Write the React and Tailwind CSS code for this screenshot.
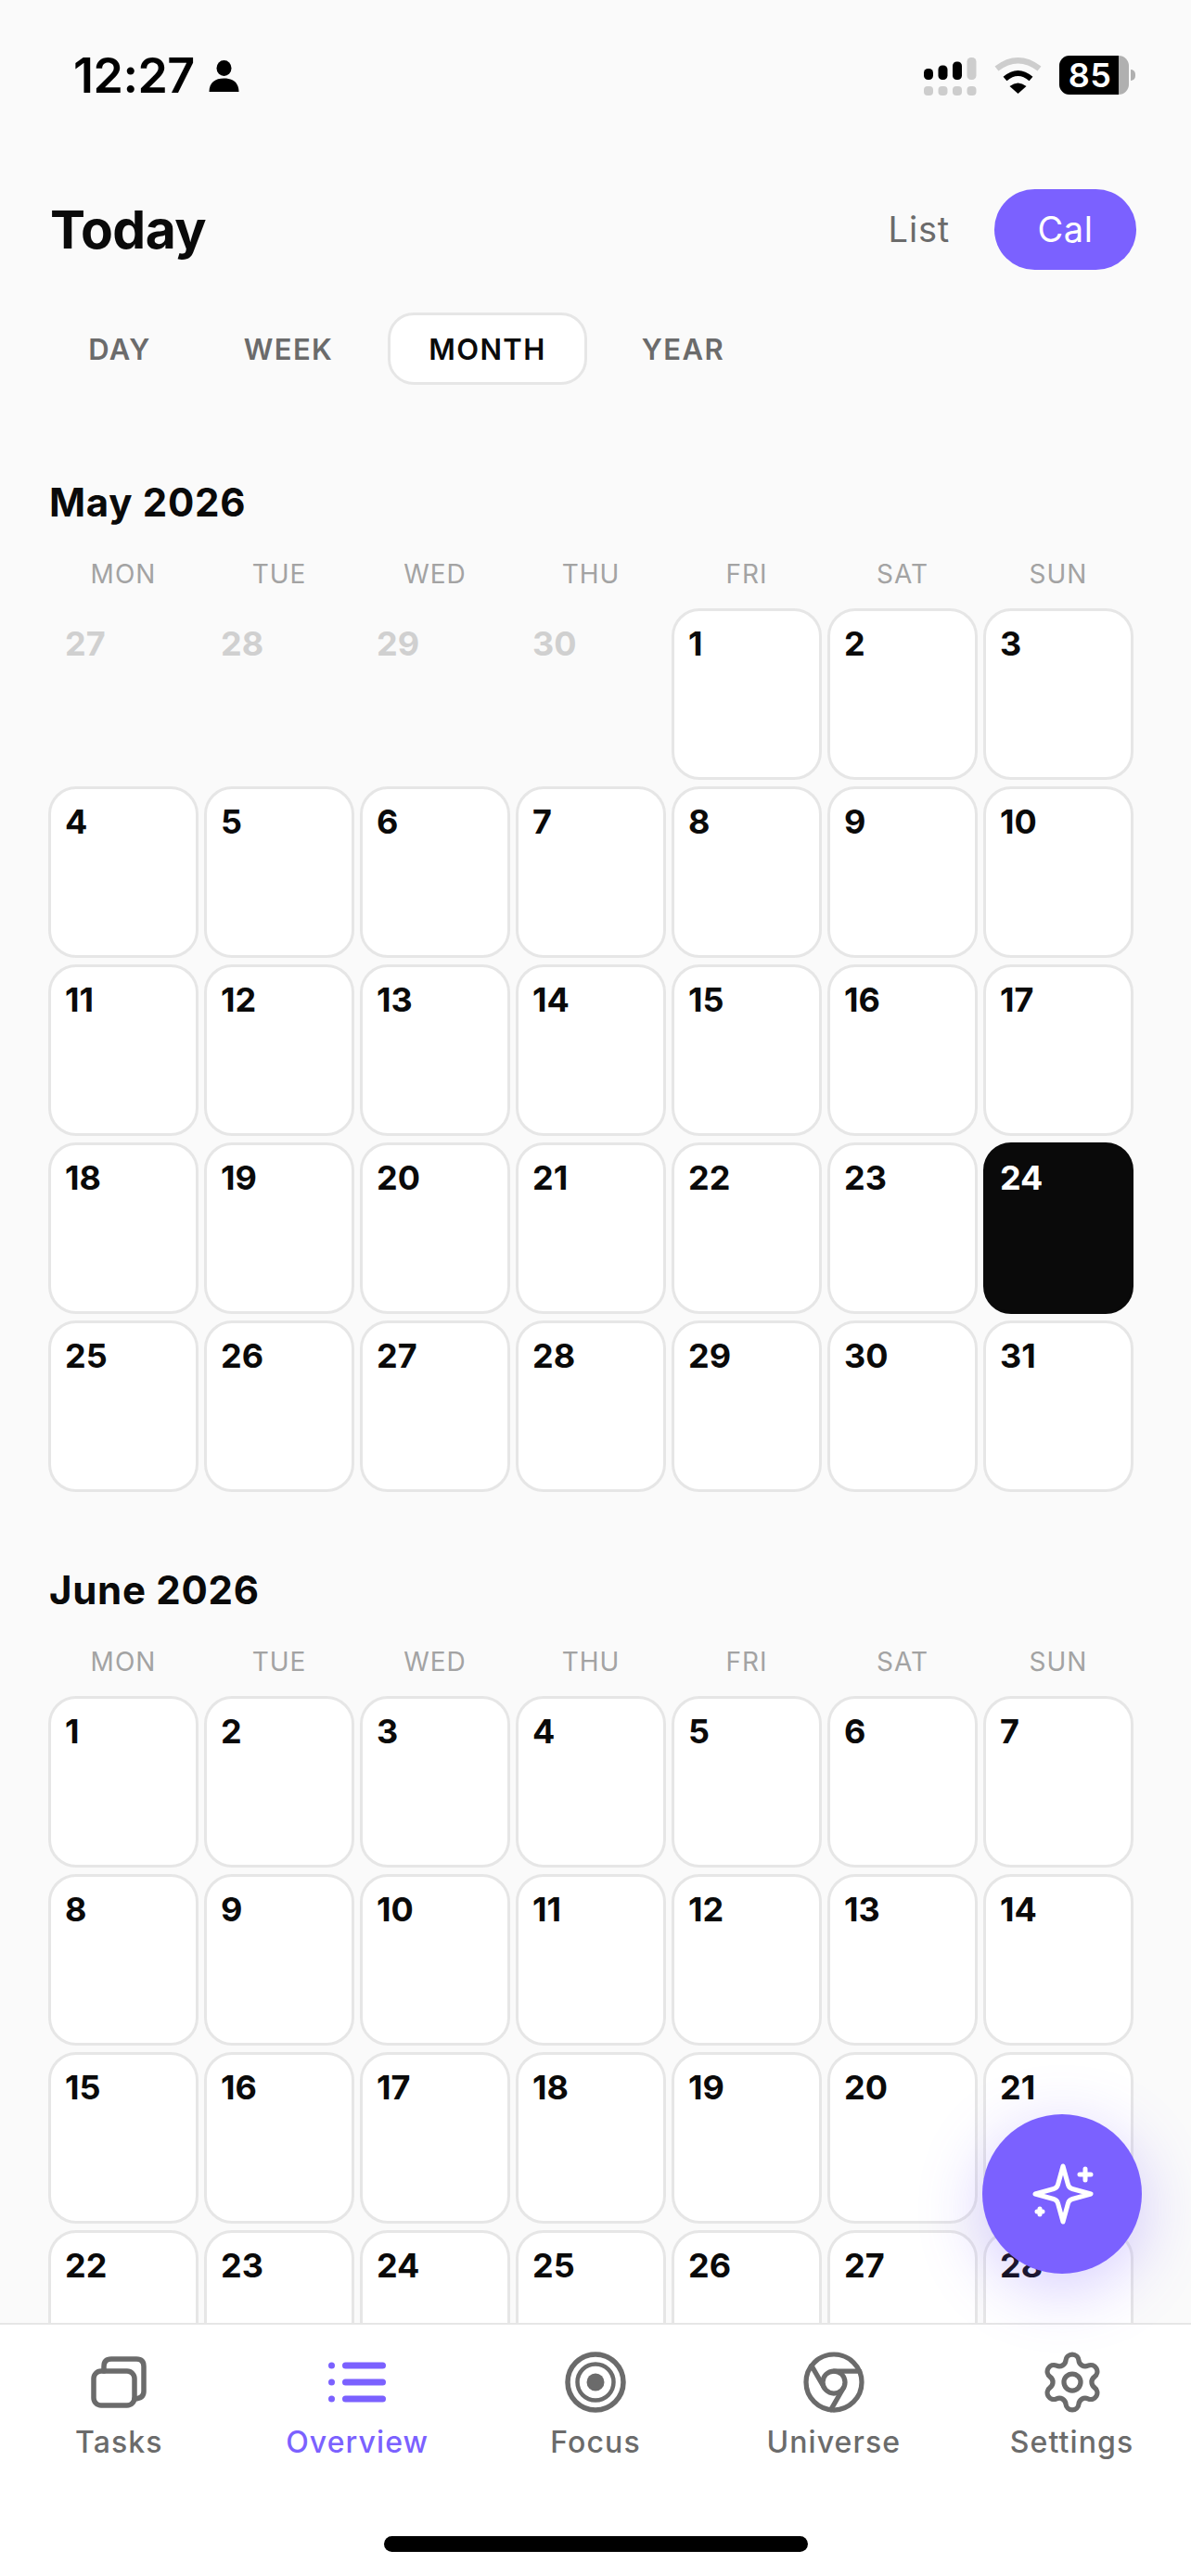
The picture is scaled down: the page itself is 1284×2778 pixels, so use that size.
import React from "react";
import { Chrome, Settings } from "lucide-react";

const WEEK = ["MON", "TUE", "WED", "THU", "FRI", "SAT", "SUN"];
const range = (a, b) => Array.from({ length: b - a + 1 }, (_, i) => a + i);

function Signal() {
  const xs = [0, 15.5, 31, 46.5];
  const tops = [12, 8.5, 4.5, 0];
  return (
    <svg width="57" height="42" viewBox="0 0 57 42" className="block">
      {xs.map((x, i) => (
        <rect key={i} x={x} y={tops[i]} width="10" height={24 - tops[i]} rx="4.5" fill={i === 3 ? "#cdcdcd" : "#000"} />
      ))}
      {xs.map((x, i) => (
        <rect key={i} x={x} y="31" width="10" height="10" rx="4" fill="#cdcdcd" />
      ))}
    </svg>
  );
}

function Wifi() {
  return (
    <svg width="53" height="40" viewBox="0 0 53 40" className="block">
      <path d="M3.5 13 Q26.5 -4.5 49.5 13" fill="none" stroke="#cdcdcd" strokeWidth="6.5" />
      <path d="M12.5 24 Q26.5 12 40.5 24" fill="none" stroke="#000" strokeWidth="6" />
      <path d="M17.5 32 Q26.5 25 35.5 32 L26.5 40 Z" fill="#000" />
    </svg>
  );
}

function Battery() {
  return (
    <div className="flex items-center">
      <div className="relative flex h-[42px] w-[75px] overflow-hidden rounded-[11px] bg-[#b0b0b0]">
        <div className="flex h-full w-[64px] items-center justify-center bg-black pl-[2px] text-[36px] font-semibold leading-none tracking-[0.5px] text-white">
          85
        </div>
      </div>
      <div className="ml-[2px] h-[12px] w-[5px] rounded-r-full bg-[#b0b0b0]" />
    </div>
  );
}

function Person() {
  return (
    <svg width="33" height="34" viewBox="0 0 33 34" className="block">
      <ellipse cx="16.5" cy="8.5" rx="8" ry="8.5" fill="#000" />
      <path d="M0.5 34 C0.5 24 7 19.5 16.5 19.5 C26 19.5 32.5 24 32.5 34 Z" fill="#000" />
    </svg>
  );
}

function Cell({ n, muted, today }) {
  if (muted) {
    return (
      <div className="h-[185px] pl-[18px] pt-[16px] text-[36px] font-bold leading-[44px] text-[#d0d0d0]">{n}</div>
    );
  }
  return (
    <div
      className={
        today
          ? "h-[185px] rounded-[30px] border-[3px] border-[#0a0a0a] bg-[#0a0a0a] pl-[15px] pt-[13px] text-[36px] font-bold leading-[44px] text-white"
          : "h-[185px] rounded-[30px] border-[3px] border-[#e6e6e6] bg-white pl-[15px] pt-[13px] text-[36px] font-bold leading-[44px] text-[#0a0a0a]"
      }
    >
      {n}
    </div>
  );
}

function Month({ title, muted = [], days, today, className }) {
  return (
    <section className={className}>
      <h2 className="ml-[53px] h-[48px] text-[42px] font-bold leading-[50px] tracking-[0.7px] text-[#0a0a0a]">{title}</h2>
      <div className="ml-[52px] mt-[37px] grid w-[1170px] grid-cols-7 gap-x-[6px]">
        {WEEK.map((d) => (
          <div key={d} className="h-[34px] text-center text-[28px] font-normal leading-[34px] tracking-[1px] text-[#a3a3a3]">
            {d}
          </div>
        ))}
      </div>
      <div className="ml-[52px] mt-[20px] grid w-[1170px] grid-cols-7 gap-x-[6px] gap-y-[7px]">
        {muted.map((n) => (
          <Cell key={"m" + n} n={n} muted />
        ))}
        {days.map((n) => (
          <Cell key={n} n={n} today={n === today} />
        ))}
      </div>
    </section>
  );
}

const GREY = "#6b6b6b";
const PURPLE = "#7b61ff";

function TasksIcon() {
  return (
    <svg width="60" height="56" viewBox="0 0 60 56" fill="none" stroke={GREY} strokeWidth="5.5" className="block">
      <rect x="3" y="16" width="44" height="37" rx="8" />
      <path d="M14 16 V11 Q14 3 22 3 H49 Q57 3 57 11 V38 Q57 45.5 47 46" strokeLinecap="round" />
    </svg>
  );
}

function ListIcon() {
  return (
    <svg width="62" height="44" viewBox="0 0 62 44" fill={PURPLE} className="block">
      <ellipse cx="3.5" cy="4" rx="3.5" ry="3.5" />
      <ellipse cx="3.5" cy="22" rx="3.5" ry="3.5" />
      <ellipse cx="3.5" cy="40" rx="3.5" ry="3.5" />
      <rect x="15" y="0.5" width="47" height="7" rx="3.5" />
      <rect x="15" y="18.5" width="47" height="7" rx="3.5" />
      <rect x="15" y="36.5" width="47" height="7" rx="3.5" />
    </svg>
  );
}

function TargetIcon() {
  return (
    <svg width="66" height="66" viewBox="0 0 66 66" fill="none" stroke={GREY} strokeWidth="5.5" className="block">
      <circle cx="33" cy="33" r="30" />
      <circle cx="33" cy="33" r="19.5" strokeWidth="4.5" />
      <circle cx="33" cy="33" r="9.5" fill={GREY} stroke="none" />
    </svg>
  );
}

function Tab({ label, active, icon }) {
  return (
    <div className="flex flex-col items-center">
      <div className="flex h-[66px] items-center justify-center">{icon}</div>
      <span
        className={
          active
            ? "mt-[12px] text-[32px] font-medium leading-[40px] tracking-[1.1px] text-[#7b61ff]"
            : "mt-[12px] text-[32px] font-medium leading-[40px] tracking-[1.1px] text-[#6b6b6b]"
        }
      >
        {label}
      </span>
    </div>
  );
}

function Sparkle() {
  return (
    <svg width="80" height="80" viewBox="0 0 80 80" fill="none" stroke="#fff" strokeLinejoin="round" strokeLinecap="round" className="ml-[2px] block">
      <path
        d="M40 10 L45.5 30 Q46.5 33.5 50 34.5 L70 40 L50 45.5 Q46.5 46.5 45.5 50 L40 70 L34.5 50 Q33.5 46.5 30 45.5 L10 40 L30 34.5 Q33.5 33.5 34.5 30 Z"
        strokeWidth="5"
      />
      <path d="M64 13 V25 M58 19 H70" strokeWidth="5" />
      <path d="M15 56 V62 M12 59 H18" strokeWidth="5" />
    </svg>
  );
}

export default function App() {
  return (
    <div className="relative flex h-[2778px] w-[1284px] flex-col overflow-hidden bg-[#fafafa] [font-family:Inter,sans-serif]">
      {/* status bar */}
      <div className="flex h-[204px] shrink-0 items-start justify-between pl-[79px] pr-[60px] pt-[60px]">
        <div className="flex items-center">
          <span className="relative top-[1px] text-[52px] font-semibold leading-[42px] tracking-[-0.5px] text-black">12:27</span>
          <span className="ml-[15px] mt-[2px]">
            <Person />
          </span>
        </div>
        <div className="flex items-start">
          <div className="mt-[2px]">
            <Signal />
          </div>
          <div className="ml-[18px] mt-[1px]">
            <Wifi />
          </div>
          <div className="ml-[18px]">
            <Battery />
          </div>
        </div>
      </div>

      {/* header */}
      <div className="flex h-[87px] shrink-0 items-center justify-between pl-[54px] pr-[59px]">
        <h1 className="text-[57px] font-bold leading-[64px] tracking-[-0.6px] text-[#0a0a0a]">Today</h1>
        <div className="flex items-center">
          <span className="text-[38px] font-normal tracking-[0.8px] text-[#6b6b6b]">List</span>
          <span className="ml-[48px] flex h-[87px] w-[153px] items-center justify-center rounded-full bg-[#7b61ff] text-[38px] font-normal tracking-[0.6px] text-white">
            Cal
          </span>
        </div>
      </div>

      {/* range tabs */}
      <div className="ml-[54px] mt-[46px] flex h-[78px] shrink-0 items-center gap-[16px] pt-0 text-[31px] font-semibold leading-[38px] tracking-[1.4px]">
        <div className="flex h-[78px] w-[150px] items-center justify-center pt-[2px] text-[#6b6b6b]">DAY</div>
        <div className="flex h-[78px] w-[182px] items-center justify-center pt-[2px] text-[#6b6b6b]">WEEK</div>
        <div className="flex h-[78px] w-[215px] items-center justify-center rounded-[28px] border-[3px] border-[#e6e6e6] bg-white pt-[2px] text-[#0a0a0a]">
          MONTH
        </div>
        <div className="flex h-[78px] w-[175px] items-center justify-center pt-[2px] text-[#6b6b6b]">YEAR</div>
      </div>

      {/* months */}
      <div className="min-h-0 flex-1 overflow-hidden pt-[102px]">
        <Month title="May 2026" muted={[27, 28, 29, 30]} days={range(1, 31)} today={24} />
        <Month title="June 2026" days={range(1, 28)} className="mt-[81px]" />
      </div>

      {/* bottom nav */}
      <nav className="relative h-[273px] shrink-0 border-t-[2px] border-[#e6e6e6] bg-white">
        <div className="grid grid-cols-5 pt-[29px]">
          <Tab label="Tasks" icon={<TasksIcon />} />
          <Tab label="Overview" active icon={<ListIcon />} />
          <Tab label="Focus" icon={<TargetIcon />} />
          <Tab label="Universe" icon={<Chrome size={72} color={GREY} strokeWidth={1.75} />} />
          <Tab label="Settings" icon={<Settings size={72} color={GREY} strokeWidth={1.75} />} />
        </div>
        <div className="absolute bottom-[26px] left-[414px] h-[17px] w-[457px] rounded-full bg-black" />
      </nav>

      {/* floating action button */}
      <button className="absolute bottom-[326px] right-[53px] flex h-[172px] w-[172px] items-center justify-center rounded-full bg-[#7b61ff] shadow-[0_16px_70px_rgba(123,97,255,0.32)]">
        <Sparkle />
      </button>
    </div>
  );
}
